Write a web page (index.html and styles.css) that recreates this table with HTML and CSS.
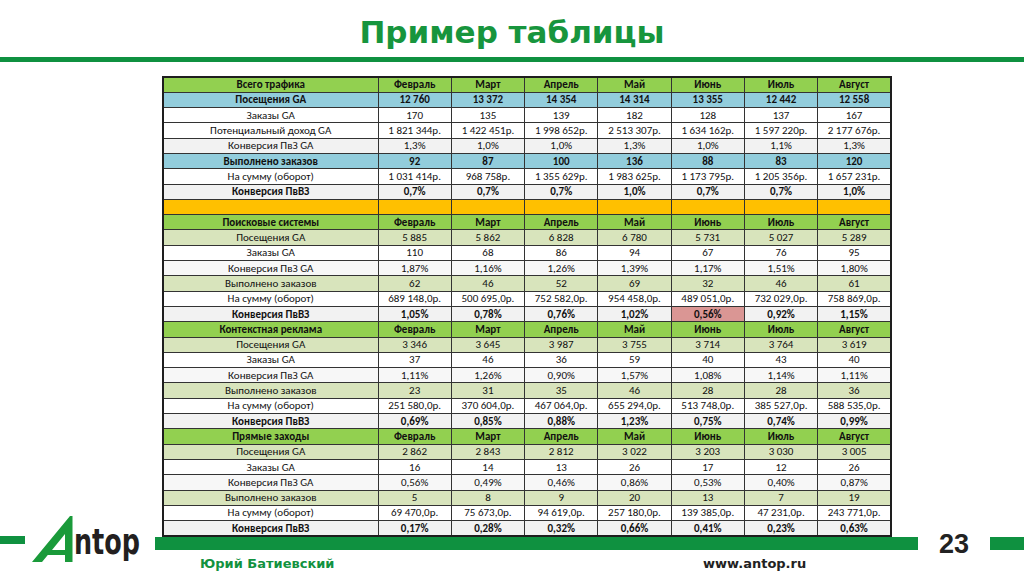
FILE: index.html
```html
<!DOCTYPE html>
<html lang="ru">
<head>
<meta charset="utf-8">
<title>Пример таблицы</title>
<link rel="stylesheet" href="styles.css">
</head>
<body>
<div class="slide">
  <header class="head">
    <h1 class="title">Пример таблицы</h1>
    <div class="rule"></div>
  </header>
  <main class="main">
    <table class="data">
      <colgroup><col class="c-name"><col><col><col><col><col><col><col></colgroup>
      <tbody>
        <tr class="hd"><td>Всего трафика</td><td>Февраль</td><td>Март</td><td>Апрель</td><td>Май</td><td>Июнь</td><td>Июль</td><td>Август</td></tr>
        <tr class="bl"><td>Посещения GA</td><td>12 760</td><td>13 372</td><td>14 354</td><td>14 314</td><td>13 355</td><td>12 442</td><td>12 558</td></tr>
        <tr><td>Заказы GA</td><td>170</td><td>135</td><td>139</td><td>182</td><td>128</td><td>137</td><td>167</td></tr>
        <tr><td>Потенциальный доход GA</td><td>1 821 344р.</td><td>1 422 451р.</td><td>1 998 652р.</td><td>2 513 307р.</td><td>1 634 162р.</td><td>1 597 220р.</td><td>2 177 676р.</td></tr>
        <tr class="gr"><td>Конверсия ПвЗ GA</td><td>1,3%</td><td>1,0%</td><td>1,0%</td><td>1,3%</td><td>1,0%</td><td>1,1%</td><td>1,3%</td></tr>
        <tr class="bl"><td>Выполнено заказов</td><td>92</td><td>87</td><td>100</td><td>136</td><td>88</td><td>83</td><td>120</td></tr>
        <tr><td>На сумму (оборот)</td><td>1 031 414р.</td><td>968 758р.</td><td>1 355 629р.</td><td>1 983 625р.</td><td>1 173 795р.</td><td>1 205 356р.</td><td>1 657 231р.</td></tr>
        <tr class="gr b"><td>Конверсия ПвВЗ</td><td>0,7%</td><td>0,7%</td><td>0,7%</td><td>1,0%</td><td>0,7%</td><td>0,7%</td><td>1,0%</td></tr>
        <tr class="or"><td></td><td></td><td></td><td></td><td></td><td></td><td></td><td></td></tr>

        <tr class="hd"><td>Поисковые системы</td><td>Февраль</td><td>Март</td><td>Апрель</td><td>Май</td><td>Июнь</td><td>Июль</td><td>Август</td></tr>
        <tr class="lg"><td>Посещения GA</td><td>5 885</td><td>5 862</td><td>6 828</td><td>6 780</td><td>5 731</td><td>5 027</td><td>5 289</td></tr>
        <tr><td>Заказы GA</td><td>110</td><td>68</td><td>86</td><td>94</td><td>67</td><td>76</td><td>95</td></tr>
        <tr class="gl"><td>Конверсия ПвЗ GA</td><td>1,87%</td><td>1,16%</td><td>1,26%</td><td>1,39%</td><td>1,17%</td><td>1,51%</td><td>1,80%</td></tr>
        <tr class="lg"><td>Выполнено заказов</td><td>62</td><td>46</td><td>52</td><td>69</td><td>32</td><td>46</td><td>61</td></tr>
        <tr><td>На сумму (оборот)</td><td>689 148,0р.</td><td>500 695,0р.</td><td>752 582,0р.</td><td>954 458,0р.</td><td>489 051,0р.</td><td>732 029,0р.</td><td>758 869,0р.</td></tr>
        <tr class="gr b"><td>Конверсия ПвВЗ</td><td>1,05%</td><td>0,78%</td><td>0,76%</td><td>1,02%</td><td class="red">0,56%</td><td>0,92%</td><td>1,15%</td></tr>

        <tr class="hd"><td>Контекстная реклама</td><td>Февраль</td><td>Март</td><td>Апрель</td><td>Май</td><td>Июнь</td><td>Июль</td><td>Август</td></tr>
        <tr class="lg"><td>Посещения GA</td><td>3 346</td><td>3 645</td><td>3 987</td><td>3 755</td><td>3 714</td><td>3 764</td><td>3 619</td></tr>
        <tr><td>Заказы GA</td><td>37</td><td>46</td><td>36</td><td>59</td><td>40</td><td>43</td><td>40</td></tr>
        <tr class="gl"><td>Конверсия ПвЗ GA</td><td>1,11%</td><td>1,26%</td><td>0,90%</td><td>1,57%</td><td>1,08%</td><td>1,14%</td><td>1,11%</td></tr>
        <tr class="lg"><td>Выполнено заказов</td><td>23</td><td>31</td><td>35</td><td>46</td><td>28</td><td>28</td><td>36</td></tr>
        <tr><td>На сумму (оборот)</td><td>251 580,0р.</td><td>370 604,0р.</td><td>467 064,0р.</td><td>655 294,0р.</td><td>513 748,0р.</td><td>385 527,0р.</td><td>588 535,0р.</td></tr>
        <tr class="gr b"><td>Конверсия ПвВЗ</td><td>0,69%</td><td>0,85%</td><td>0,88%</td><td>1,23%</td><td>0,75%</td><td>0,74%</td><td>0,99%</td></tr>

        <tr class="hd"><td>Прямые заходы</td><td>Февраль</td><td>Март</td><td>Апрель</td><td>Май</td><td>Июнь</td><td>Июль</td><td>Август</td></tr>
        <tr class="lg"><td>Посещения GA</td><td>2 862</td><td>2 843</td><td>2 812</td><td>3 022</td><td>3 203</td><td>3 030</td><td>3 005</td></tr>
        <tr><td>Заказы GA</td><td>16</td><td>14</td><td>13</td><td>26</td><td>17</td><td>12</td><td>26</td></tr>
        <tr class="gl"><td>Конверсия ПвЗ GA</td><td>0,56%</td><td>0,49%</td><td>0,46%</td><td>0,86%</td><td>0,53%</td><td>0,40%</td><td>0,87%</td></tr>
        <tr class="lg"><td>Выполнено заказов</td><td>5</td><td>8</td><td>9</td><td>20</td><td>13</td><td>7</td><td>19</td></tr>
        <tr><td>На сумму (оборот)</td><td>69 470,0р.</td><td>75 673,0р.</td><td>94 619,0р.</td><td>257 180,0р.</td><td>139 385,0р.</td><td>47 231,0р.</td><td>243 771,0р.</td></tr>
        <tr class="gr b"><td>Конверсия ПвВЗ</td><td>0,17%</td><td>0,28%</td><td>0,32%</td><td>0,66%</td><td>0,41%</td><td>0,23%</td><td>0,63%</td></tr>
      </tbody>
    </table>
  </main>
  <footer class="foot">
    <div class="foot-top">
      <div class="bar bar-left"></div>
      <svg class="logo" viewBox="0 0 120 50" width="120" height="50" aria-label="Antop">
        <path class="logo-a" fill-rule="evenodd" d="M4,48 L42,2 L44.5,2 L44.5,48 L37,48 L37,41 L19.8,41 L14,48 Z M37,20 L37,36 L24,36 Z"/>
        <text class="logo-t" x="46" y="40" textLength="66" lengthAdjust="spacingAndGlyphs">ntop</text>
      </svg>
      <div class="bar bar-main"></div>
      <div class="page-num">23</div>
      <div class="bar bar-right"></div>
    </div>
    <div class="foot-bottom">
      <span class="author">Юрий Батиевский</span>
      <span class="site">www.antop.ru</span>
    </div>
  </footer>
</div>
</body>
</html>
```

FILE: styles.css
```css
html, body {
  margin: 0;
  padding: 0;
  background: #ffffff;
}

.slide {
  width: 1024px;
  height: 576px;
  overflow: hidden;
  background: #ffffff;
  display: flex;
  flex-direction: column;
}

.head {
  display: flex;
  flex-direction: column;
}

.title {
  margin: 0;
  padding-top: 14px;
  height: 50px;
  box-sizing: border-box;
  text-align: center;
  font-family: "DejaVu Sans", Verdana, sans-serif;
  font-weight: bold;
  font-size: 31px;
  line-height: 36px;
  color: #17953d;
}

.rule {
  height: 5px;
  background: #0f9140;
  margin-top: 7px;
}

.main {
  padding-top: 14px;
  padding-left: 162px;
}

.data {
  width: 730px;
  table-layout: fixed;
  border-collapse: collapse;
  border: 2px solid #1e1e1e;
  font-family: "Carlito", "Lato", "Liberation Sans", sans-serif;
  font-size: 11px;
  color: #111;
}

.c-name {
  width: 215px;
}

.data tr {
  height: 15.3px;
}

.data td {
  border: 1px solid #333;
  padding: 0 2px;
  text-align: center;
  line-height: 13px;
  white-space: nowrap;
  overflow: hidden;
}

.hd td {
  background: #92d050;
  font-weight: bold;
}

.bl td {
  background: #92cddc;
  font-weight: bold;
}

.gr td {
  background: #f2f2f2;
}

.gl td {
  background: #f7f7f7;
}

.lg td {
  background: #d8e4bc;
}

.or td {
  background: #ffc000;
}

.b td {
  font-weight: bold;
}

.data td.red {
  background: #da9694;
}

.foot {
  display: flex;
  flex-direction: column;
}

.foot-top {
  display: flex;
  align-items: flex-start;
  height: 13px;
}

.bar {
  background: #0f9140;
  flex: none;
}

.bar-left {
  width: 25px;
  height: 8px;
  margin-top: -1px;
}

.logo {
  flex: none;
  margin-left: 3px;
  margin-top: -23px;
  overflow: visible;
}

.logo-a {
  fill: #1a9a3a;
}

.logo-t {
  font-family: "DejaVu Sans", sans-serif;
  font-weight: bold;
  font-size: 36px;
  fill: #231f20;
}

.bar-main {
  width: 763px;
  height: 13px;
  margin-left: 7px;
}

.page-num {
  flex: none;
  margin-left: 21px;
  margin-top: -6px;
  font-family: "Liberation Sans", Arial, sans-serif;
  font-weight: bold;
  font-size: 27px;
  line-height: 27px;
  color: #222;
}

.bar-right {
  width: 34px;
  height: 13px;
  margin-left: auto;
}

.foot-bottom {
  display: flex;
  padding-top: 6px;
  font-family: "DejaVu Sans", Verdana, sans-serif;
  font-weight: bold;
  font-size: 13px;
  line-height: 15px;
}

.author {
  flex: none;
  width: 503px;
  margin-left: 200px;
  color: #12923f;
}

.site {
  color: #222;
}
```
